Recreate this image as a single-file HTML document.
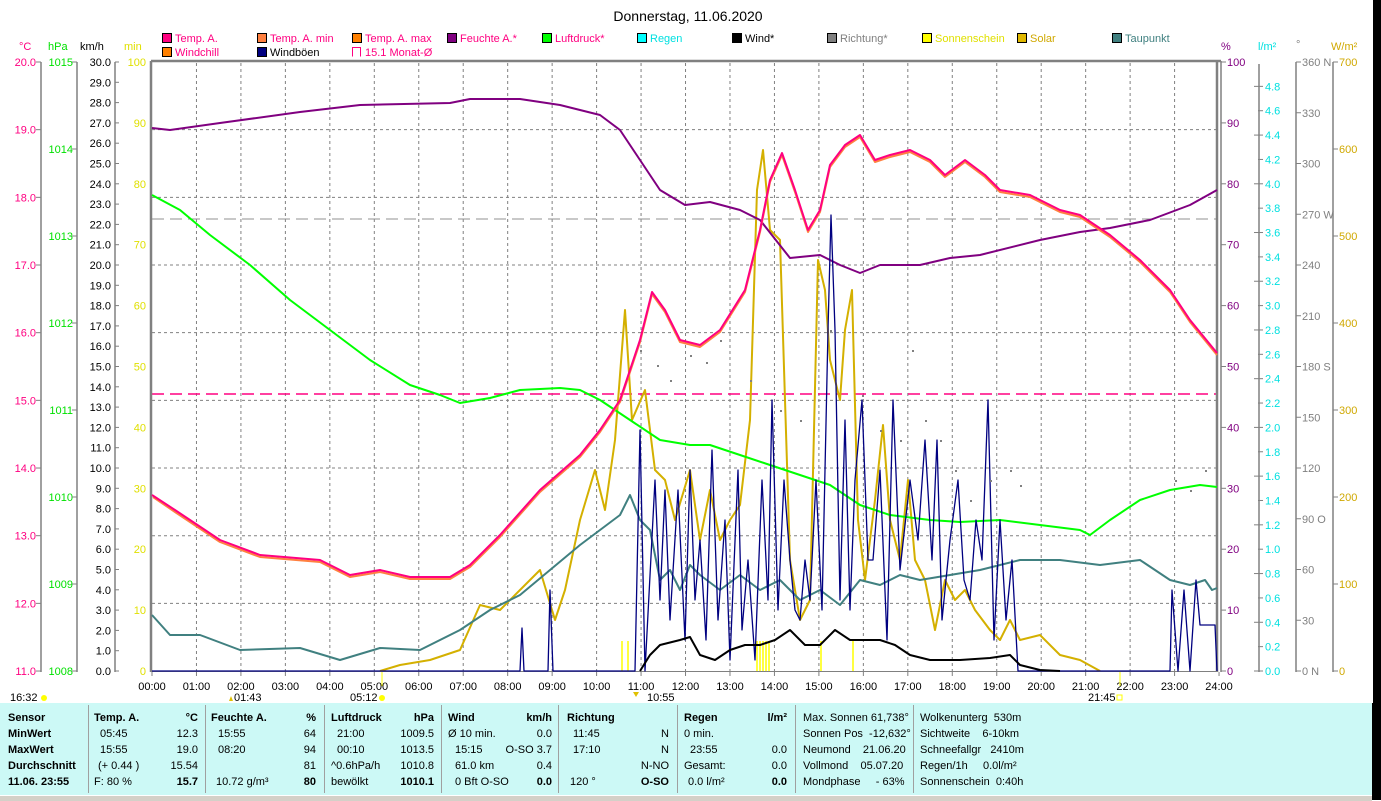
<!DOCTYPE html>
<html><head><meta charset="utf-8">
<style>
html,body{margin:0;padding:0;background:#fff;}
body{width:1381px;height:800px;overflow:hidden;position:relative;font-family:"Liberation Sans",sans-serif;}
svg text{font-family:"Liberation Sans",sans-serif;font-size:11px;}
#tbl{position:absolute;left:0;top:703px;width:1372px;height:92px;background:#ccf9f6;font-size:11px;}
#tbl div{position:absolute;white-space:nowrap;}
.b{font-weight:bold;}
.sep{position:absolute;top:2px;width:1px;height:88px;background:#a0a0a0;}
</style></head><body>
<svg width="1381" height="703" style="position:absolute;left:0;top:0">
<rect x="1373" y="0" width="8" height="703" fill="#000"/>
<text x="688" y="21" text-anchor="middle" style="font-size:14px">Donnerstag, 11.06.2020</text>
<g stroke="#000" stroke-width="1">
<rect x="162.5" y="33.5" width="9" height="9" fill="#ff0080"/>
<rect x="257.5" y="33.5" width="9" height="9" fill="#ff8040"/>
<rect x="352.5" y="33.5" width="9" height="9" fill="#ff8000"/>
<rect x="447.5" y="33.5" width="9" height="9" fill="#800080"/>
<rect x="542.5" y="33.5" width="9" height="9" fill="#00ff00"/>
<rect x="637.5" y="33.5" width="9" height="9" fill="#00ffff"/>
<rect x="732.5" y="33.5" width="9" height="9" fill="#000"/>
<rect x="827.5" y="33.5" width="9" height="9" fill="#808080"/>
<rect x="922.5" y="33.5" width="9" height="9" fill="#ffff00"/>
<rect x="1017.5" y="33.5" width="9" height="9" fill="#e0b800"/>
<rect x="1112.5" y="33.5" width="9" height="9" fill="#408080"/>
<rect x="162.5" y="47.5" width="9" height="9" fill="#ff8000"/>
<rect x="257.5" y="47.5" width="9" height="9" fill="#000080"/>
</g>
<path d="M352.5 56.5V47.5H360.5V56.5" fill="none" stroke="#ff0080"/>
<g fill="#ff0080">
<text x="175" y="42">Temp. A.</text><text x="270" y="42">Temp. A. min</text><text x="365" y="42">Temp. A. max</text>
<text x="460" y="42">Feuchte A.*</text><text x="555" y="42">Luftdruck*</text>
<text x="175" y="56">Windchill</text><text x="365" y="56">15.1 Monat-Ø</text></g>
<text x="650" y="42" fill="#00e0e0">Regen</text>
<text x="745" y="42">Wind*</text>
<text x="840" y="42" fill="#808080">Richtung*</text>
<text x="935" y="42" fill="#e0e000">Sonnenschein</text>
<text x="1030" y="42" fill="#d0a800">Solar</text>
<text x="1125" y="42" fill="#408080">Taupunkt</text>
<text x="270" y="56">Windböen</text>
<text x="19" y="50" fill="#ff0080">°C</text><text x="48" y="50" fill="#00e000">hPa</text>
<text x="80" y="50">km/h</text><text x="124" y="50" fill="#e0e000">min</text>
<text x="1221" y="50" fill="#800080">%</text><text x="1258" y="50" fill="#00e0e0">l/m²</text>
<text x="1296" y="48" fill="#808080">°</text><text x="1331" y="50" fill="#d0a800">W/m²</text>
<g stroke="#808080" stroke-width="1.5">
<line x1="41" y1="62" x2="41" y2="672"/><line x1="77" y1="62" x2="77" y2="672"/><line x1="115" y1="62" x2="115" y2="672"/>
<line x1="1259" y1="64" x2="1259" y2="672"/><line x1="1296" y1="62" x2="1296" y2="672"/><line x1="1333" y1="62" x2="1333" y2="672"/>
</g>
<g id="ax" font-size="11"></g>
<g stroke="#808080" stroke-width="1" stroke-dasharray="3,3" fill="none" id="grid"></g>
<line x1="152" y1="219" x2="1218" y2="219" stroke="#909090" stroke-dasharray="12,6"/>
<line x1="152" y1="394" x2="1218" y2="394" stroke="#ff0080" stroke-width="1.5" stroke-dasharray="12,6"/>
<g stroke="#808080" stroke-width="2.5" fill="none">
<line x1="151" y1="61" x2="1221" y2="61"/><line x1="151" y1="61" x2="151" y2="672"/>
<line x1="1217" y1="61" x2="1217" y2="672"/></g>
<line x1="1221" y1="61" x2="1221" y2="672" stroke="#808080" stroke-width="1.5"/>
<line x1="151" y1="671.5" x2="1217" y2="671.5" stroke="#808080" stroke-width="1"/>
<g stroke="#ffff00" stroke-width="1.5">
<line x1="622" y1="641" x2="622" y2="671"/><line x1="628" y1="641" x2="628" y2="671"/><line x1="757" y1="641" x2="757" y2="671"/><line x1="760" y1="641" x2="760" y2="671"/><line x1="763" y1="641" x2="763" y2="671"/><line x1="766" y1="641" x2="766" y2="671"/><line x1="769" y1="641" x2="769" y2="671"/><line x1="821" y1="641" x2="821" y2="671"/><line x1="853" y1="641" x2="853" y2="671"/></g>
<g fill="none" stroke-width="2" stroke-linejoin="round">
<polyline stroke="#d4b000" points="380,671 400,665 430,660 460,650 480,605 500,610 520,590 540,570 555,620 565,590 580,520 595,470 605,510 615,440 625,310 632,420 645,390 655,470 665,480 675,520 690,470 700,540 710,490 720,540 730,520 740,505 750,420 757,190 763,150 770,230 780,240 790,560 800,620 810,600 818,260 825,290 830,360 840,400 845,330 852,290 858,520 865,580 875,500 883,425 890,520 900,560 908,480 915,560 925,580 935,630 945,580 955,600 965,590 975,610 990,630 1000,640 1010,620 1020,640 1040,635 1060,655 1080,660 1100,671"/>
<polyline stroke="#408080" points="152,615 170,635 200,635 240,650 300,648 340,660 380,648 420,650 460,630 490,610 520,595 550,570 580,545 600,530 620,515 630,495 640,520 650,530 660,580 670,570 680,590 690,565 700,575 720,590 740,575 760,590 780,580 800,600 820,590 840,605 860,580 880,585 900,575 920,580 950,575 980,570 1000,565 1020,560 1060,560 1100,565 1140,560 1170,580 1190,585 1205,580 1212,590 1217,588"/>
<polyline stroke="#00ff00" points="152,195 180,210 210,235 250,265 290,300 330,330 370,360 410,385 440,395 460,403 490,398 520,390 560,388 580,390 600,400 630,420 660,440 690,445 710,445 740,455 770,465 800,475 830,485 860,505 890,515 930,520 960,522 1000,520 1040,525 1080,530 1090,535 1110,520 1140,500 1170,490 1200,485 1217,487"/>
<polyline stroke="#800080" points="152,128 170,130 220,123 300,112 360,105 450,103 470,99 520,99 560,105 600,115 620,130 640,160 660,190 685,205 710,202 740,210 760,220 790,258 820,255 840,265 860,273 880,265 920,265 950,258 980,255 1040,240 1080,232 1110,228 1150,220 1190,205 1217,190"/>
<polyline stroke="#000080" stroke-width="1.3" points="152,671 520,671 522,628 524,671 548,671 550,590 553,671 635,671 640,430 645,671 655,480 660,600 665,490 670,620 678,490 685,640 690,470 695,600 700,540 706,640 712,450 718,620 725,520 730,660 738,470 742,630 748,560 755,660 762,480 768,600 772,400 778,610 784,480 790,560 795,610 800,620 805,560 810,600 816,480 822,610 828,330 831,215 835,330 840,600 845,420 850,610 855,480 862,400 868,560 873,560 880,470 887,640 893,400 900,570 910,480 918,540 925,440 932,560 937,440 942,620 950,540 958,480 964,580 970,600 976,520 982,560 988,400 994,640 1000,520 1006,620 1012,560 1018,671 1170,671 1172,590 1178,671 1184,590 1190,671 1196,580 1200,625 1215,625 1217,671"/>
<polyline stroke="#000" points="640,671 650,655 660,645 680,640 690,637 700,655 715,660 730,650 745,645 760,645 775,640 790,630 805,645 820,645 835,630 850,640 865,640 880,640 895,645 910,655 930,660 960,660 990,658 1010,655 1020,665 1040,670 1060,671"/>
<polyline stroke="#ff8040" points="153,497 175,512 220,542 260,557 320,562 350,577 380,572 410,579 450,579 470,567 500,537 540,492 580,457 600,432 620,402 640,342 652,294 665,312 680,342 700,347 720,332 745,292 760,232 770,182 782,155 795,192 808,232 820,212 830,167 845,147 860,137 875,162 890,157 910,152 930,162 945,177 965,162 985,177 1000,192 1030,197 1060,212 1080,217 1110,237 1140,262 1170,292 1190,322 1217,355"/>
<polyline stroke="#ff0080" points="152,495 175,510 220,540 260,555 320,560 350,575 380,570 410,577 450,577 470,565 500,535 540,490 580,455 600,430 620,400 640,340 652,292 665,310 680,340 700,345 720,330 745,290 760,230 770,180 782,153 795,190 808,230 820,210 830,165 845,145 860,135 875,160 890,155 910,150 930,160 945,175 965,160 985,175 1000,190 1030,195 1060,210 1080,215 1110,235 1140,260 1170,290 1190,320 1217,353"/>
</g>
<g fill="#808080" id="dots"></g>
<g id="tl"></g>
<text x="10" y="701">16:32</text><circle cx="44" cy="698" r="3" fill="#ffff00"/>
<text x="234" y="701">01:43</text><path d="M229 701l2-5 2 5z" fill="#e0c000"/>
<text x="350" y="701">05:12</text><circle cx="382" cy="698" r="3" fill="#ffff00"/>
<text x="647" y="701">10:55</text><path d="M633 692l3 5 3-5z" fill="#e0c000"/>
<text x="1088" y="701">21:45</text><rect x="1117" y="695" width="5" height="5" fill="none" stroke="#ffff00"/>
<line x1="1120" y1="672" x2="1120" y2="686" stroke="#ffff00"/>
<line x1="382" y1="672" x2="382" y2="686" stroke="#ffff00"/>
</svg>
<div id="tbl">
<div class="sep" style="left:88px"></div><div class="sep" style="left:205px"></div><div class="sep" style="left:324px"></div><div class="sep" style="left:441px"></div><div class="sep" style="left:558px"></div><div class="sep" style="left:677px"></div><div class="sep" style="left:795px"></div><div class="sep" style="left:913px"></div>
<div class="b" style="left:8px;top:9px">Sensor</div><div class="b" style="left:8px;top:25px">MinWert</div><div class="b" style="left:8px;top:41px">MaxWert</div><div class="b" style="left:8px;top:57px">Durchschnitt</div><div class="b" style="left:8px;top:73px">11.06. 23:55</div>
<div class="b" style="left:94px;top:9px">Temp. A.</div><div class="b" style="right:1174px;top:9px">°C</div>
<div style="left:100px;top:25px">05:45</div><div style="right:1174px;top:25px">12.3</div>
<div style="left:100px;top:41px">15:55</div><div style="right:1174px;top:41px">19.0</div>
<div style="left:98px;top:57px">(+ 0.44 )</div><div style="right:1174px;top:57px">15.54</div>
<div style="left:94px;top:73px">F: 80 %</div><div class="b" style="right:1174px;top:73px">15.7</div>
<div class="b" style="left:211px;top:9px">Feuchte A.</div><div class="b" style="right:1056px;top:9px">%</div>
<div style="left:218px;top:25px">15:55</div><div style="right:1056px;top:25px">64</div>
<div style="left:218px;top:41px">08:20</div><div style="right:1056px;top:41px">94</div>
<div style="right:1056px;top:57px">81</div>
<div style="left:216px;top:73px">10.72 g/m³</div><div class="b" style="right:1056px;top:73px">80</div>
<div class="b" style="left:331px;top:9px">Luftdruck</div><div class="b" style="right:938px;top:9px">hPa</div>
<div style="left:337px;top:25px">21:00</div><div style="right:938px;top:25px">1009.5</div>
<div style="left:337px;top:41px">00:10</div><div style="right:938px;top:41px">1013.5</div>
<div style="left:331px;top:57px">^0.6hPa/h</div><div style="right:938px;top:57px">1010.8</div>
<div style="left:331px;top:73px">bewölkt</div><div class="b" style="right:938px;top:73px">1010.1</div>
<div class="b" style="left:448px;top:9px">Wind</div><div class="b" style="right:820px;top:9px">km/h</div>
<div style="left:448px;top:25px">Ø 10 min.</div><div style="right:820px;top:25px">0.0</div>
<div style="left:455px;top:41px">15:15</div><div style="right:820px;top:41px">O-SO 3.7</div>
<div style="left:455px;top:57px">61.0 km</div><div style="right:820px;top:57px">0.4</div>
<div style="left:455px;top:73px">0 Bft O-SO</div><div class="b" style="right:820px;top:73px">0.0</div>
<div class="b" style="left:567px;top:9px">Richtung</div>
<div style="left:573px;top:25px">11:45</div><div style="right:703px;top:25px">N</div>
<div style="left:573px;top:41px">17:10</div><div style="right:703px;top:41px">N</div>
<div style="right:703px;top:57px">N-NO</div>
<div style="left:570px;top:73px">120 °</div><div class="b" style="right:703px;top:73px">O-SO</div>
<div class="b" style="left:684px;top:9px">Regen</div><div class="b" style="right:585px;top:9px">l/m²</div>
<div style="left:684px;top:25px">0 min.</div>
<div style="left:690px;top:41px">23:55</div><div style="right:585px;top:41px">0.0</div>
<div style="left:684px;top:57px">Gesamt:</div><div style="right:585px;top:57px">0.0</div>
<div style="left:688px;top:73px">0.0 l/m²</div><div class="b" style="right:585px;top:73px">0.0</div>
<div style="left:803px;top:9px">Max. Sonnen 61,738°</div><div style="left:803px;top:25px">Sonnen Pos &nbsp;-12,632°</div><div style="left:803px;top:41px">Neumond &nbsp;&nbsp;&nbsp;21.06.20</div><div style="left:803px;top:57px">Vollmond &nbsp;&nbsp;&nbsp;05.07.20</div><div style="left:803px;top:73px">Mondphase &nbsp;&nbsp;&nbsp;&nbsp;- 63%</div>
<div style="left:920px;top:9px">Wolkenunterg &nbsp;530m</div><div style="left:920px;top:25px">Sichtweite &nbsp;&nbsp;&nbsp;6-10km</div><div style="left:920px;top:41px">Schneefallgr &nbsp;&nbsp;2410m</div><div style="left:920px;top:57px">Regen/1h &nbsp;&nbsp;&nbsp;&nbsp;0.0l/m²</div><div style="left:920px;top:73px">Sonnenschein &nbsp;0:40h</div>
</div>
<div style="position:absolute;left:1372px;top:703px;width:9px;height:97px;background:#000"></div>
<div style="position:absolute;left:0;top:795px;width:1372px;height:5px;background:#d4d0c8;border-top:1px solid #fff"></div>
<script>
(function(){
var ns="http://www.w3.org/2000/svg";
function T(g,x,y,s,c,a){var t=document.createElementNS(ns,"text");t.setAttribute("x",x);t.setAttribute("y",y);if(c)t.setAttribute("fill",c);if(a)t.setAttribute("text-anchor",a);t.textContent=s;g.appendChild(t);}
function L(g,x1,y1,x2,y2,c,d){var l=document.createElementNS(ns,"line");l.setAttribute("x1",x1);l.setAttribute("y1",y1);l.setAttribute("x2",x2);l.setAttribute("y2",y2);l.setAttribute("stroke",c||"#808080");if(d)l.setAttribute("stroke-dasharray",d);g.appendChild(l);}
var ax=document.getElementById("ax"),gr=document.getElementById("grid"),tl=document.getElementById("tl");
var i,y;
for(i=0;i<=9;i++){y=62+i*67.67;T(ax,36,y+4,(20-i).toFixed(1),"#ff0080","end");L(ax,36,y,41,y);}
for(i=0;i<=7;i++){y=62+i*87;T(ax,73,y+4,String(1015-i),"#00e000","end");L(ax,72,y,77,y);}
for(i=0;i<=30;i++){y=62+i*20.3;T(ax,111,y+4,(30-i).toFixed(1),"#000","end");L(ax,115,y,119,y);}
for(i=0;i<=10;i++){y=62+i*60.9;T(ax,146,y+4,String(100-i*10),"#e0e000","end");L(ax,1221,y,1226,y);T(ax,1227,y+4,String(100-i*10),"#800080");}
for(i=1;i<=25;i++){y=62+i*24.36;var v=(5-i*0.2).toFixed(1);L(ax,1254+(i%2?0:4),y,1263,y);T(ax,1265,y+4,v,"#00e0e0");}
var dn={360:" N",270:" W",180:" S",90:" O",0:" N"};
for(i=0;i<=12;i++){y=62+i*50.75;var d=360-i*30;L(ax,1296,y,1301,y);T(ax,1302,y+4,d+(dn[d]||""),"#808080");}
for(i=0;i<=7;i++){y=62+i*87;L(ax,1333,y,1338,y);T(ax,1339,y+4,String(700-i*100),"#d0a800");}
for(i=1;i<=23;i++){var x=152+i*44.46;L(gr,x,63,x,671);}
for(i=1;i<=8;i++){y=62+i*67.67;L(gr,152,y,1217,y);}
for(i=0;i<=24;i++){var x=152+i*44.46;T(tl,x,690,(i<10?"0":"")+i+":00","#000","middle");L(tl,x,672,x,676);}
var dt=document.getElementById("dots");
var pts=[[640,350],[657,365],[670,380],[690,355],[706,362],[720,340],[750,380],[780,410],[800,420],[830,330],[862,395],[880,430],[900,440],[912,350],[925,420],[940,440],[955,470],[970,500],[990,480],[1010,470],[1020,485],[1175,480],[1190,490],[1205,470]];
pts.forEach(function(p){var r=document.createElementNS(ns,"rect");r.setAttribute("x",p[0]);r.setAttribute("y",p[1]);r.setAttribute("width",2);r.setAttribute("height",2);dt.appendChild(r);});
})();
</script>
</body></html>
